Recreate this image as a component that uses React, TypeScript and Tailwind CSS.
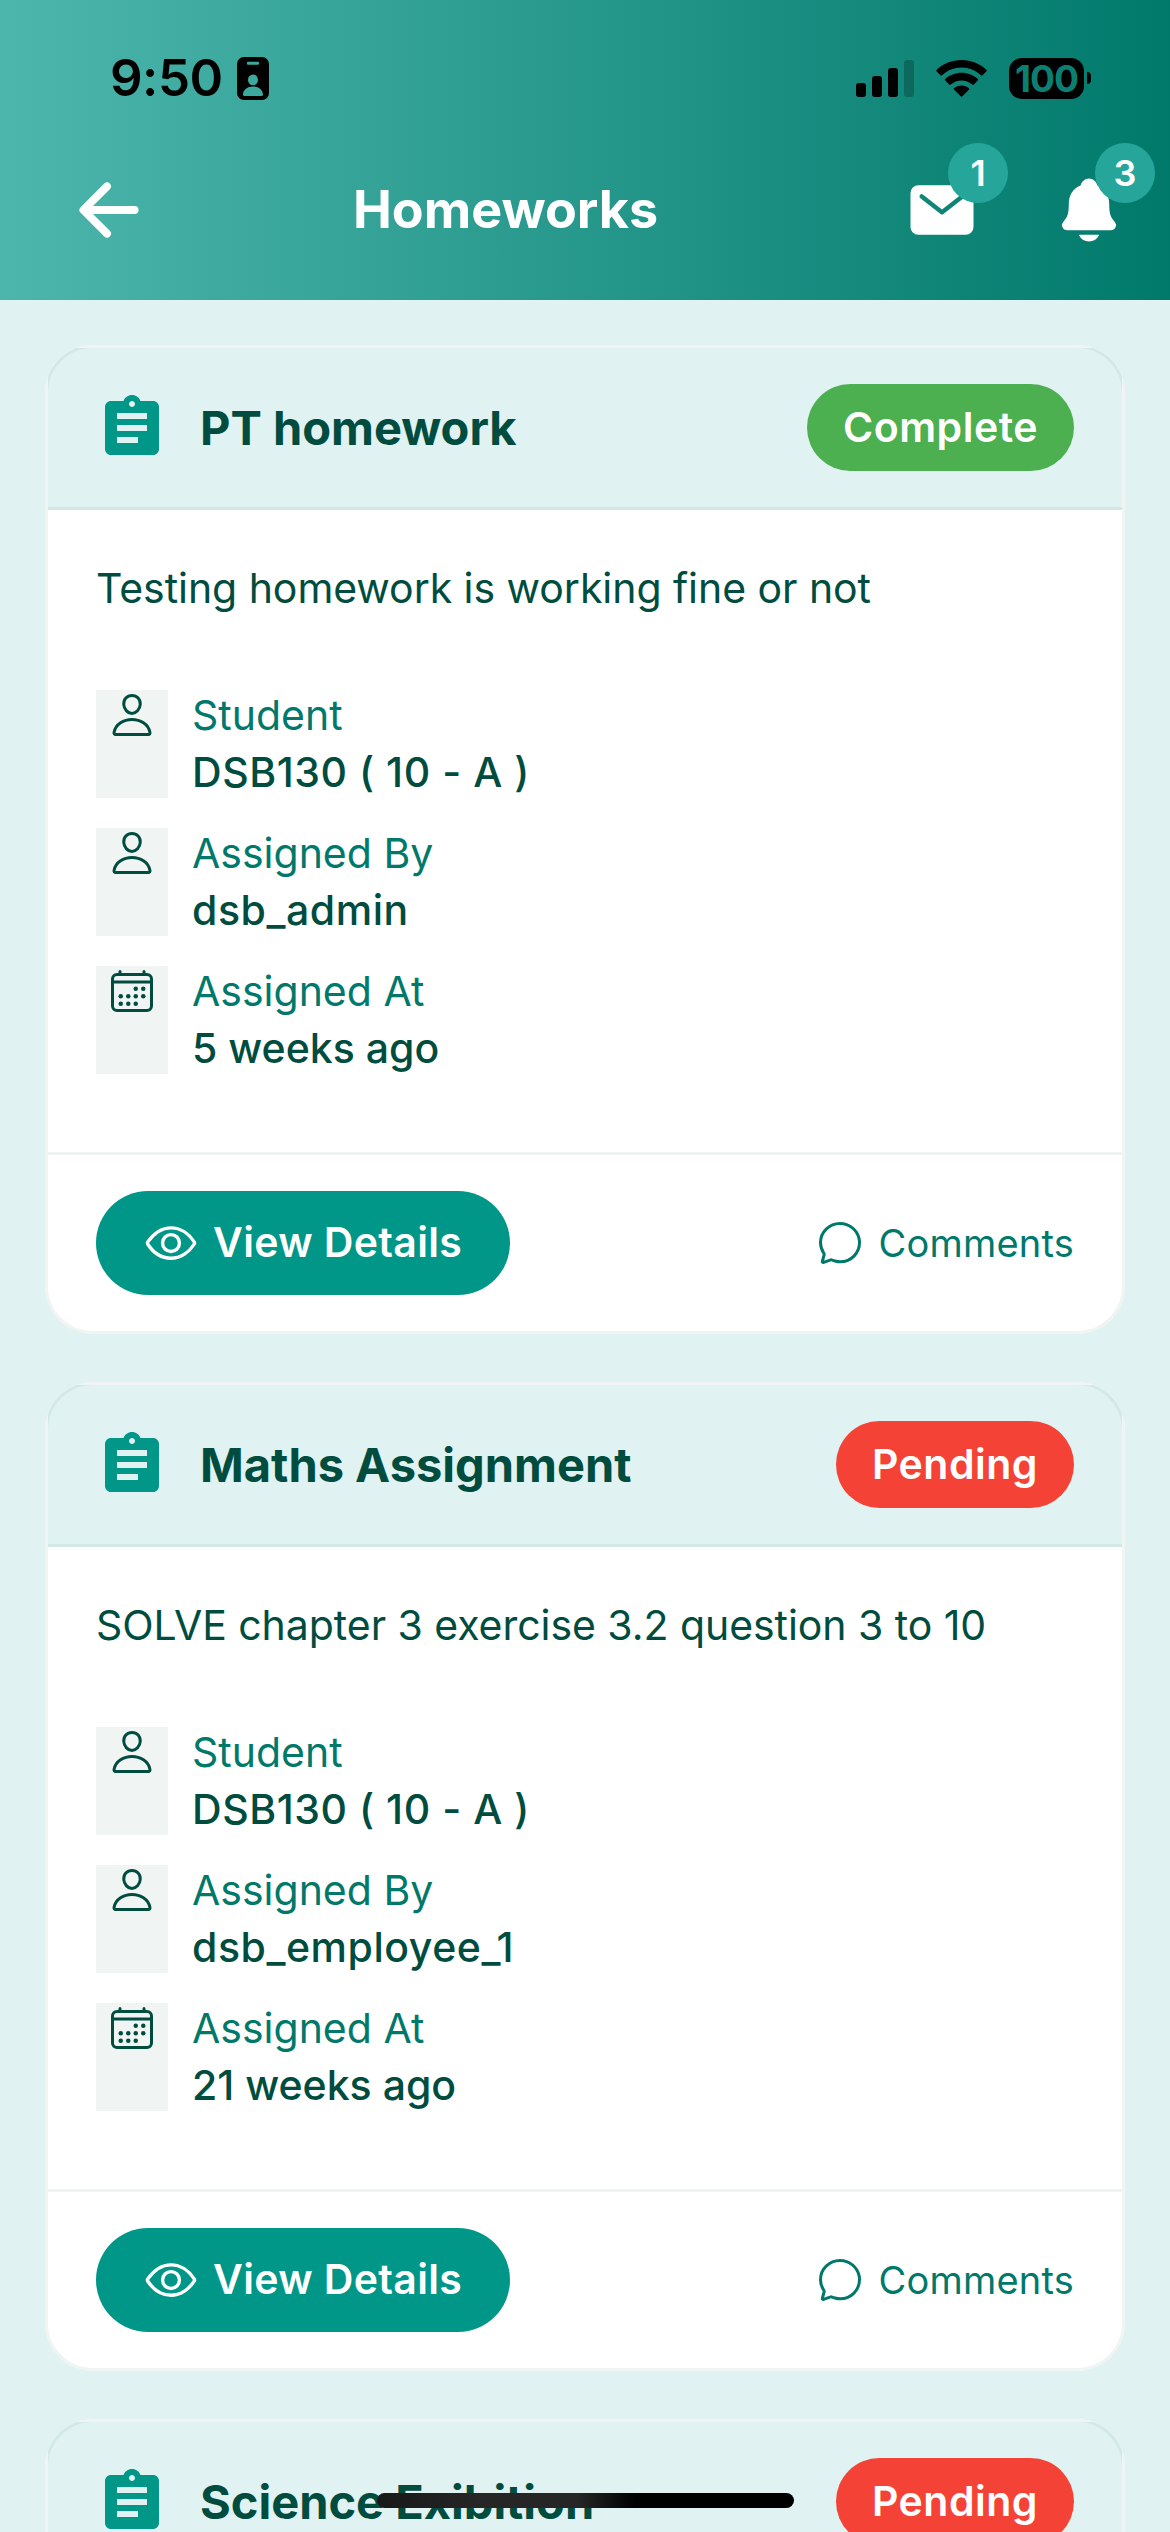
import type { ReactNode } from "react";
import {
  IoArrowBack,
  IoCalendarOutline,
  IoChatbubbleOutline,
  IoEyeOutline,
  IoMail,
  IoNotifications,
  IoPersonOutline,
} from "react-icons/io5";
import { MdAssignment } from "react-icons/md";

interface HomeworkDetails {
  description: string;
  student: string;
  assignedBy: string;
  assignedAt: string;
}

interface Homework {
  title: string;
  status: "Complete" | "Pending";
  details?: HomeworkDetails;
}

const homeworks: Homework[] = [
  {
    title: "PT homework",
    status: "Complete",
    details: {
      description: "Testing homework is working fine or not",
      student: "DSB130 ( 10 - A )",
      assignedBy: "dsb_admin",
      assignedAt: "5 weeks ago",
    },
  },
  {
    title: "Maths Assignment",
    status: "Pending",
    details: {
      description: "SOLVE chapter 3 exercise 3.2 question 3 to 10",
      student: "DSB130 ( 10 - A )",
      assignedBy: "dsb_employee_1",
      assignedAt: "21 weeks ago",
    },
  },
  {
    title: "Science Exibition",
    status: "Pending",
  },
];

function StatusBar() {
  return (
    <div className="flex h-[156px] items-center pl-[110px] pr-[79px]">
      <span className="w-[127px] text-[51px] leading-[60px] font-semibold tracking-[-0.5px] text-black">9:50</span>
      <svg className="h-[43px] w-8" viewBox="0 0 32 43">
        <path
          fillRule="evenodd"
          d="M7 0h18a7 7 0 0 1 7 7v29a7 7 0 0 1-7 7H7a7 7 0 0 1-7-7V7a7 7 0 0 1 7-7zM11 4.8a1 1 0 0 0-1 1v1a1 1 0 0 0 1 1h10a1 1 0 0 0 1-1v-1a1 1 0 0 0-1-1zM16 17.5a5 5.4 0 1 0 0 10.800a5 5.400 0 1 0 0-10.800zM6 37.500q0 1.500 1.500 1.500h17q1.500 0 1.500-1.500c0-4.500-4.500-8-10-8s-10 3.500-10 8z"
        />
      </svg>
      <div className="ml-auto flex items-center">
        <svg className="h-[37px] w-[58px]" viewBox="0 0 58 37">
          <rect x="0" y="23" width="10" height="14" rx="3" />
          <rect x="16" y="16" width="10" height="21" rx="3" />
          <rect x="32" y="8" width="10" height="29" rx="3" />
          <rect x="48" y="0" width="10" height="37" rx="3" opacity="0.22" />
        </svg>
        <svg className="ml-[22px] h-[37px] w-[51px]" viewBox="0 0 51 37">
          <path d="M25.500 0C35 0 43.800 3.600 50.300 9.700q.9.900 0 1.800l-3.700 3.700q-.8.800-1.700 0C39.600 10.400 32.900 7.600 25.500 7.600S11.400 10.400 6.100 15.200q-.9.800-1.700 0L.7 11.500q-.9-.9 0-1.800C7.200 3.600 16 0 25.500 0z" />
          <path d="M25.500 12.700c6.200 0 11.900 2.300 16.200 6.100q.9.900 0 1.800l-3.800 3.800q-.8.800-1.700.1c-2.900-2.500-6.600-4.100-10.700-4.100s-7.800 1.600-10.700 4.100q-.9.700-1.700-.1l-3.800-3.800q-.9-.9 0-1.800c4.300-3.800 10-6.100 16.200-6.100z" />
          <path d="M25.500 25.400c2.800 0 5.300 1 7.300 2.600q.9.900 0 1.800l-6.400 6.400q-.9.900-1.800 0l-6.400-6.400q-.9-.9 0-1.800c2-1.600 4.500-2.600 7.300-2.600z" />
        </svg>
        <div className="ml-[22px] flex h-[41px] w-[75px] items-center justify-center rounded-[13px] bg-black text-[37px] leading-none font-bold tracking-[-1px] text-[#0b8072]">
          100
        </div>
        <div className="ml-[3px] h-3 w-1 rounded-r-full bg-black" />
      </div>
    </div>
  );
}

function BadgeIcon({ count, children }: { count: number; children: ReactNode }) {
  return (
    <div className="relative size-[72px] text-[72px] text-white">
      {children}
      <span className="absolute -top-[31px] -right-[30px] flex size-[60px] items-center justify-center rounded-full bg-[#26a69a] text-[36px] leading-none font-semibold text-white">
        {count}
      </span>
    </div>
  );
}

function Header() {
  return (
    <header className="h-[300px] shrink-0 bg-[linear-gradient(to_right,#4db6ac,#00796b)]">
      <StatusBar />
      <div className="flex h-[108px] items-center pl-[67px] pr-[45px]">
        <IoArrowBack className="size-[84px] text-white" />
        <h1 className="ml-[202px] text-[52px] leading-[60px] font-bold whitespace-nowrap text-white">Homeworks</h1>
        <div className="ml-auto flex gap-[75px]">
          <BadgeIcon count={1}>
            <IoMail />
          </BadgeIcon>
          <BadgeIcon count={3}>
            <IoNotifications />
          </BadgeIcon>
        </div>
      </div>
    </header>
  );
}

interface InfoRowProps {
  icon: ReactNode;
  label: string;
  value: string;
  wide?: boolean;
}

function InfoRow({ icon, label, value, wide }: InfoRowProps) {
  return (
    <div className="flex h-[108px] gap-6">
      <div className="flex w-[72px] justify-center bg-[#004d40]/6 pt-px text-5xl text-[#004d40]">{icon}</div>
      <div className="flex flex-col gap-[7px] text-[41px] leading-[50px]">
        <span className="text-[#00796b]">{label}</span>
        <span className={`font-medium text-[#004d40] ${wide ? "tracking-[0.55px]" : "tracking-normal"}`}>{value}</span>
      </div>
    </div>
  );
}

function HomeworkCard({ homework }: { homework: Homework }) {
  const { title, status, details } = homework;

  return (
    <article className="relative h-[989px] shrink-0 overflow-hidden rounded-[48px] bg-white p-[3px]">
      <div className="flex h-[162px] items-center border-b-[3px] border-[#d2e8e5] bg-[#e0f2f1] px-12">
        <MdAssignment className="size-[72px] text-[#009688]" />
        <h2 className="ml-8 text-[47px] leading-[60px] font-bold text-[#004d40]">{title}</h2>
        <span
          className={`ml-auto flex h-[87px] items-center rounded-full px-9 text-[41px] font-semibold tracking-[0.5px] text-white ${
            status === "Complete" ? "bg-[#4caf50]" : "bg-[#f44336]"
          }`}
        >
          {status}
        </span>
      </div>

      {details && (
        <>
          <div className="h-[642px] px-12 pt-12">
            <p className="mb-[72px] text-[41px] leading-[60px] tracking-[-0.05px] text-[#004d40]">
              {details.description}
            </p>
            <div className="flex flex-col gap-[30px]">
              <InfoRow icon={<IoPersonOutline />} label="Student" value={details.student} wide />
              <InfoRow icon={<IoPersonOutline />} label="Assigned By" value={details.assignedBy} wide />
              <InfoRow icon={<IoCalendarOutline />} label="Assigned At" value={details.assignedAt} />
            </div>
          </div>

          <div className="flex h-[179px] items-center justify-between border-t-[3px] border-[#eff3f2] px-12">
            <button className="flex h-[104px] items-center gap-[15px] rounded-full bg-[#009688] px-12 text-[41px] font-semibold tracking-[0.35px] text-white">
              <IoEyeOutline className="size-[54px]" />
              View Details
            </button>
            <button className="flex items-center gap-[15px] text-[38px] tracking-[0.2px] text-[#00796b]">
              <IoChatbubbleOutline className="size-12" />
              Comments
            </button>
          </div>
        </>
      )}

      {/* Translucent outline sits over the header tint at the corners */}
      <div className="pointer-events-none absolute inset-0 rounded-[48px] border-[3px] border-[#004d40]/6" />
    </article>
  );
}

export default function App() {
  return (
    <div className="relative flex h-[2532px] w-[1170px] flex-col overflow-hidden bg-[#e0f2f1] font-['Inter',sans-serif]">
      <Header />
      <main className="flex flex-col gap-12 px-[45px] pt-[45px]">
        {homeworks.map((homework) => (
          <HomeworkCard key={homework.title} homework={homework} />
        ))}
      </main>

      {/* Home indicator */}
      <div className="absolute bottom-6 left-[377px] h-[15px] w-[417px] rounded-full bg-[linear-gradient(to_right,#181818,#262626_25%,#262626_48%,#000_62%)]" />
    </div>
  );
}
